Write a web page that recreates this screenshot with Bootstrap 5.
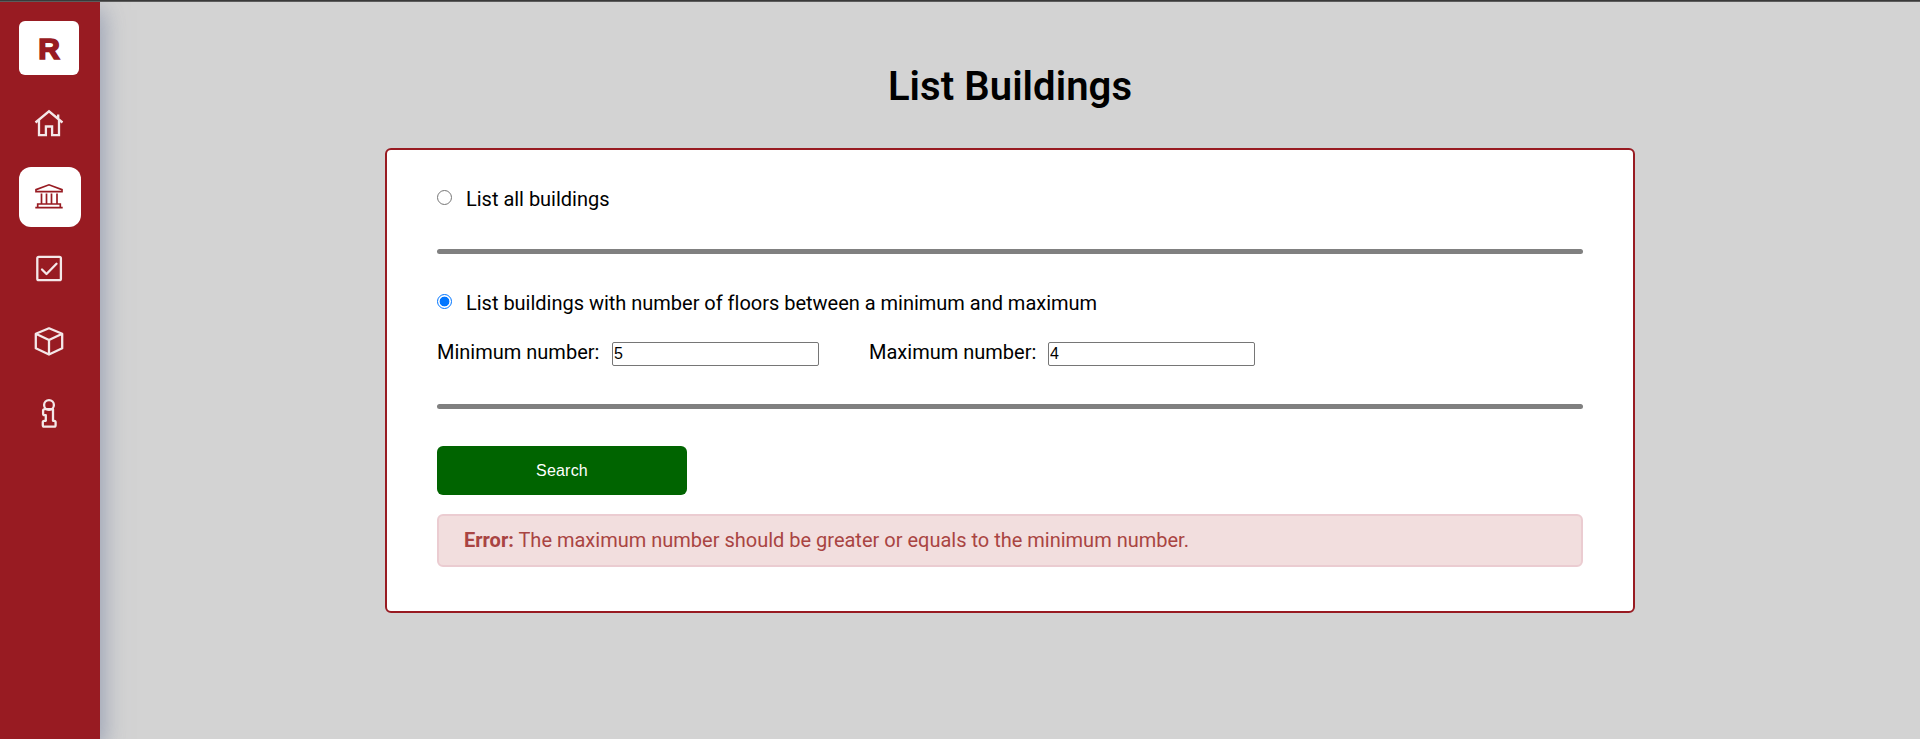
<!DOCTYPE html>
<html lang="en">
<head>
<meta charset="utf-8">
<meta name="viewport" content="width=device-width, initial-scale=1">
<title>List Buildings</title>
<link href="https://cdn.jsdelivr.net/npm/bootstrap@5.3.0/dist/css/bootstrap.min.css" rel="stylesheet">
<style>
  body { font-family: Roboto, sans-serif; font-size: 20px; line-height: 24px; color: #000; background: #d3d3d3; height: 739px; overflow: hidden; }
  .top-line { height: 2px; background: linear-gradient(#3a3a3a 50%, #5c5c5c 50%); position: relative; z-index: 1; }
  .side-menu { width: 100px; background: #981b22; box-shadow: 4px 8px 22px 0 rgba(112, 124, 156, .58); padding: 19px 19px 0; }
  .brand { width: 60px; height: 54px; border-radius: 6px; background: #fff; color: #981b22; font: 900 30px/56px "Liberation Sans", Arial, sans-serif; margin-bottom: 18px; }
  .brand span { -webkit-text-stroke: 1.6px #981b22; }
  .menu-item { width: 62px; height: 60px; border-radius: 12px; color: #f4e8e9; padding-right: 2px; margin-bottom: 12.5px; }
  .menu-item.active { background: #fff; color: #981b22; margin-top: 1px; margin-bottom: 12px; }
  .menu-item svg { width: 32px; height: 32px; fill: none; stroke: currentColor; stroke-width: 2.3; display: block; flex: none; margin-left: -1px; }
  h1 { font-size: 40px; font-weight: 600; line-height: 48px; letter-spacing: .08px; margin: 61px 0 37px; }
  .panel { width: 1250px; height: 465px; border: 2px solid #981b22; border-radius: 6px; background: #fff; padding: 34px 50px 0; }
  .choice { height: 30px; letter-spacing: -.015px; }
  .choice input { appearance: none; width: 15px; height: 15px; border: 1px solid #767676; border-radius: 50%; margin: 0 14px 3px 0; background: #fff; }
  .choice input:checked { border-color: #0075ff; background: radial-gradient(circle, #0075ff 4.6px, #fff 5.2px); }
  .rule { height: 5px; border-radius: 3px; background: gray; }
  .num { width: 207px; height: 24px; border: 1px solid #767676; border-radius: 2px; padding: 0 1px; font: 16px "Liberation Sans", Arial, sans-serif; color: #000; }
  .btn-search { width: 250px; height: 49px; border: 0; border-radius: 6px; background: #006400; color: #fff; font: 16px "Liberation Sans", Arial, sans-serif; letter-spacing: .2px; }
  .btn-search:hover { background: #006400; color: #fff; }
  .error-box { height: 53px; border: 2px solid #ebccd1; border-radius: 6px; background: #f2dede; color: #a94442; padding: 0 0 2px 25px; }
</style>
</head>
<body class="d-flex flex-column">
<div class="top-line flex-shrink-0"></div>
<div class="d-flex flex-grow-1">
  <nav class="side-menu d-flex flex-column flex-shrink-0">
    <a class="brand d-flex justify-content-center text-decoration-none flex-shrink-0" href="#"><span>R</span></a>
    <a class="menu-item d-flex align-items-center justify-content-center" href="#" aria-label="Home">
      <svg viewBox="0 0 32 32"><path d="M2.500 15.500 16 4.300 29.500 15.500M6 13v15.200h6.900v-8.700h6.200v8.700H26V13M25.200 11.500V7.400"/></svg>
    </a>
    <a class="menu-item active d-flex align-items-center justify-content-center" href="#" aria-label="Buildings">
      <svg viewBox="0 0 32 32"><path stroke-width="1.700" d="M3 10v-1.300L16 3.800 29 8.700V10.700H3zM8.500 12.500v10M13.500 12.500v10M18.500 12.500v10M24 12.500v10M4.700 26v-3h22.600v3M2.300 26.700h27.400"/></svg>
    </a>
    <a class="menu-item d-flex align-items-center justify-content-center" href="#" aria-label="Tasks">
      <svg viewBox="0 0 32 32"><rect x="4.300" y="3.800" width="23.600" height="23.400" rx="1.500"/><path stroke-linecap="round" stroke-linejoin="round" d="m9 16.500 4.500 4.500 10-10.200"/></svg>
    </a>
    <a class="menu-item d-flex align-items-center justify-content-center" href="#" aria-label="Rooms">
      <svg viewBox="0 0 32 32" stroke-linejoin="round"><path d="M16 3.300 29.200 8.800v14.500L16 29.500 2.800 23.300V8.800zM2.800 8.800 16 15l13.200-6.200M16 15v14.500"/></svg>
    </a>
    <a class="menu-item d-flex align-items-center justify-content-center" href="#" aria-label="Information">
      <svg viewBox="0 0 32 32" stroke-linejoin="round"><circle cx="16" cy="7" r="4.900"/><path d="M12 11.200h8v11.600h1.200q1.400 0 1.400 1.400v3q0 1.400-1.400 1.400H11.200q-1.400 0-1.400-1.400v-3q0-1.400 1.400-1.400h1.600v-5.600h-1.200q-1.500 0-1.500-1.400v-3.200q0-1.400 1.900-1.400z"/></svg>
    </a>
  </nav>
  <main class="flex-grow-1 d-flex flex-column align-items-center">
    <h1>List Buildings</h1>
    <form class="panel">
      <label class="choice d-flex align-items-center"><input type="radio" name="mode">List all buildings</label>
      <div class="rule" style="margin-top:35px"></div>
      <label class="choice d-flex align-items-center" style="margin-top:34px"><input type="radio" name="mode" checked>List buildings with number of floors between a minimum and maximum</label>
      <div class="d-flex align-items-center" style="margin-top:19px;height:30px">
        <label for="min" style="width:175px">Minimum number:</label><input id="min" class="num mt-1" type="text" value="5">
        <label for="max" style="width:179px;margin-left:50px">Maximum number:</label><input id="max" class="num mt-1" type="text" value="4">
      </div>
      <div class="rule" style="margin-top:37px"></div>
      <button class="btn btn-search d-block" type="button" style="margin-top:37px">Search</button>
      <div class="error-box d-flex align-items-center" style="margin-top:19px" role="alert"><span><b>Error:</b> The maximum number should be greater or equals to the minimum number.</span></div>
    </form>
  </main>
</div>
<script src="https://cdn.jsdelivr.net/npm/bootstrap@5.3.0/dist/js/bootstrap.bundle.min.js"></script>
</body>
</html>
